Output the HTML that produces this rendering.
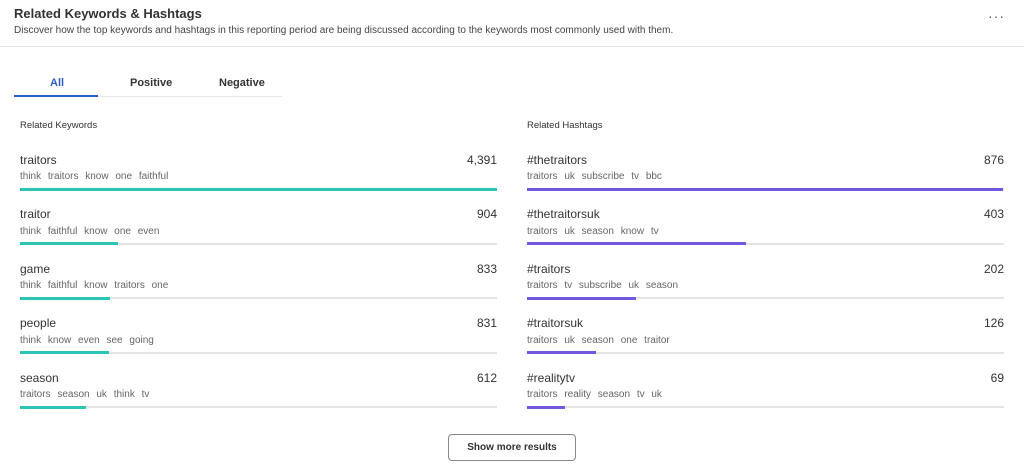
<!DOCTYPE html><html><head><style>
body{margin:0;width:1024px;height:468px;background:#fff;font-family:"Liberation Sans",sans-serif;color:#333;position:relative;overflow:hidden}
.a{position:absolute;white-space:nowrap}
.h{left:14px;top:6px;font-size:13px;font-weight:bold;color:#333}
.d{left:14px;top:25px;font-size:10px;color:#444}
.t{font-size:11px;font-weight:bold;top:77px}
.sec{font-size:9.5px;color:#333;top:120px}
.kw{font-size:12px;color:#333}
.n{font-size:12px;color:#333;text-align:right}
.tg{font-size:10px;color:#666;word-spacing:4px}
.bar{position:absolute;height:2px;background:#e4e4e4}
.f{position:absolute;left:0;top:-0.5px;height:3px}
</style></head><body>
<div class="a h">Related Keywords &amp; Hashtags</div>
<div class="a d">Discover how the top keywords and hashtags in this reporting period are being discussed according to the keywords most commonly used with them.</div>
<div class="a" style="left:988px;top:8px;font-size:14px;letter-spacing:1px;color:#555">···</div>
<div style="position:absolute;left:0;top:46px;width:1024px;height:1px;background:#e6e6e6"></div>
<div style="position:absolute;left:14px;top:96px;width:268px;height:1px;background:#e8e8e8"></div>
<div style="position:absolute;left:14px;top:95px;width:84px;height:2px;background:#2b5fc7"></div>
<div class="a t" style="left:50px;color:#2b5fc7">All</div>
<div class="a t" style="left:130px">Positive</div>
<div class="a t" style="left:219px">Negative</div>
<div class="a sec" style="left:20px">Related Keywords</div>
<div class="a sec" style="left:527px">Related Hashtags</div>
<div id="c"></div>
<div class="a" style="left:448px;top:434px;width:126px;height:25px;border:1px solid #888;border-radius:4px;text-align:center;line-height:25px;font-size:10px;font-weight:bold;color:#333">Show more results</div>
<script>
var L=[["traitors","4,391","think traitors know one faithful",477],["traitor","904","think faithful know one even",98],["game","833","think faithful know traitors one",90],["people","831","think know even see going",89],["season","612","traitors season uk think tv",66]];
var R=[["#thetraitors","876","traitors uk subscribe tv bbc",476],["#thetraitorsuk","403","traitors uk season know tv",219],["#traitors","202","traitors tv subscribe uk season",109],["#traitorsuk","126","traitors uk season one traitor",69],["#realitytv","69","traitors reality season tv uk",38]];
var h="";
function col(a,x,c){a.forEach(function(r,i){var y=152+i*54.5;
h+='<div class="a kw" style="left:'+x+'px;top:'+(y+0.5)+'px">'+r[0]+'</div>';
h+='<div class="a n" style="left:'+(x+377)+'px;width:100px;top:'+(y+0.5)+'px">'+r[1]+'</div>';
h+='<div class="a tg" style="left:'+x+'px;top:'+(y+19)+'px">'+r[2]+'</div>';
h+='<div class="bar" style="left:'+x+'px;top:'+(y+36)+'px;width:477px"><div class="f" style="width:'+r[3]+'px;background:'+c+'"></div></div>';});}
col(L,20,"#2cc5b5");col(R,527,"#7557dd");
document.getElementById("c").innerHTML=h;
</script>
</body></html>
